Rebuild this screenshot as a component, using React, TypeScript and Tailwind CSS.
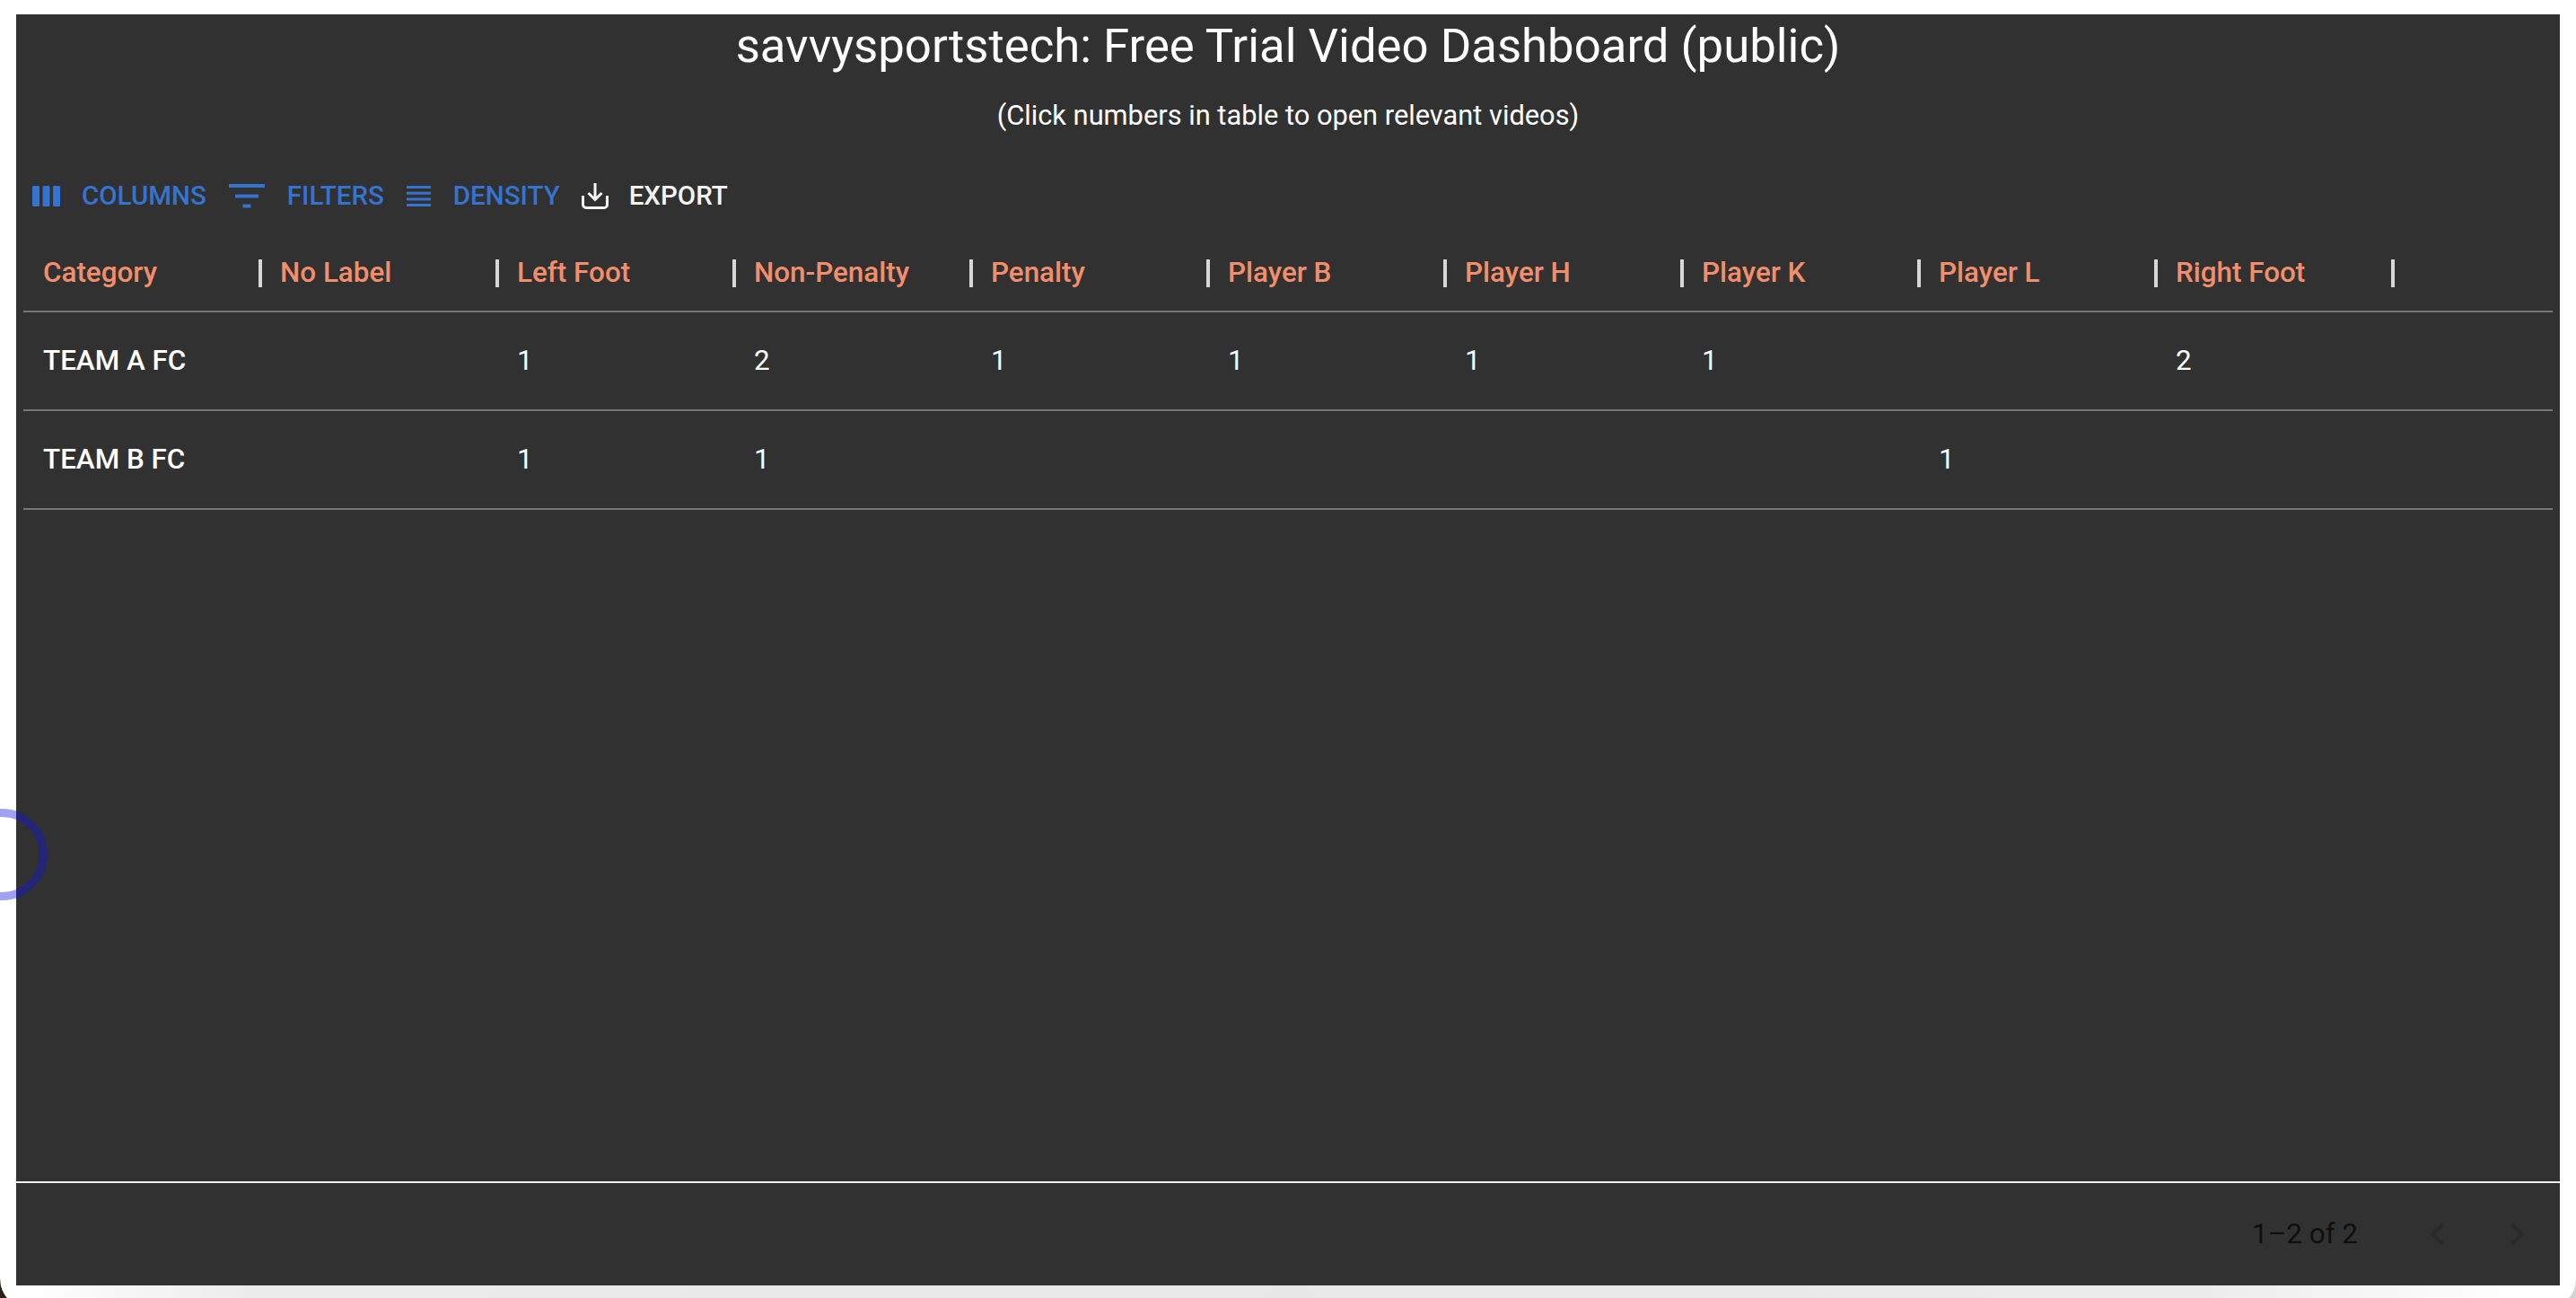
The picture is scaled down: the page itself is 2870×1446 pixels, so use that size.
const columns = ["Category", "No Label", "Left Foot", "Non-Penalty", "Penalty", "Player B", "Player H", "Player K", "Player L", "Right Foot"];

const rows = [
  ["TEAM A FC", "", "1", "2", "1", "1", "1", "1", "", "2"],
  ["TEAM B FC", "", "1", "1", "", "", "", "", "1", ""],
];

const ColumnsIcon = () => (
  <svg width="31" height="23" viewBox="0 0 31 23" fill="#3573d1">
    <rect x="0" y="0" width="8" height="23" rx="1.5" />
    <rect x="11.5" y="0" width="8" height="23" rx="1.5" />
    <rect x="23" y="0" width="8" height="23" rx="1.5" />
  </svg>
);

const FilterIcon = () => (
  <svg width="40" height="27" viewBox="0 0 40 27" fill="#3573d1">
    <rect x="0" y="0" width="40" height="4" />
    <rect x="7" y="11.5" width="26" height="4" />
    <rect x="15.5" y="22.5" width="9" height="4" />
  </svg>
);

const DensityIcon = () => (
  <svg width="27" height="23" viewBox="0 0 27 23" fill="#3573d1">
    <rect x="0" y="0" width="27" height="3" />
    <rect x="0" y="6.7" width="27" height="3" />
    <rect x="0" y="13.4" width="27" height="3" />
    <rect x="0" y="20" width="27" height="3" />
  </svg>
);

const ExportIcon = () => (
  <svg width="30" height="29" viewBox="0 0 30 29" fill="none" stroke="#f5f5f5" strokeWidth="3">
    <path d="M15 0v18M7.5 11 15 18.5 22.5 11" />
    <path d="M1.5 14v10a3.5 3.5 0 0 0 3.5 3.5h20a3.5 3.5 0 0 0 3.5-3.5V14" />
  </svg>
);

const Chevron = ({ d }: { d: string }) => (
  <svg width="52" height="52" viewBox="0 0 24 24" fill="#2a2a2a">
    <path d={d} />
  </svg>
);

export default function App() {
  return (
    <div className="h-[1446px] w-[2870px] overflow-hidden bg-[linear-gradient(to_right,#2a2018_50%,#d4d4d4_50%)] font-['Roboto',sans-serif]">
      <div className="relative flex h-[1458px] flex-col overflow-hidden rounded-b-[34px] bg-white">
        <div className="mx-[18px] mt-[16px] flex h-[1416px] flex-col bg-[#313131]">
          <h1 className="mt-[10px] h-[50px] text-center text-[52.7px] leading-[50px] font-normal text-white">
            savvysportstech: Free Trial Video Dashboard (public)
          </h1>
          <p className="mt-[27px] h-[52px] text-center text-[30.8px] leading-[52px] text-white">
            (Click numbers in table to open relevant videos)
          </p>

          <div className="mt-[35px] flex h-[56px] items-center pl-[18px] text-[29.5px] font-medium">
            <div className="flex items-center gap-[24px] text-[#3573d1]">
              <ColumnsIcon />
              <span>COLUMNS</span>
            </div>
            <div className="ml-[25px] flex items-center gap-[25px] text-[#3573d1]">
              <FilterIcon />
              <span>FILTERS</span>
            </div>
            <div className="ml-[25px] flex items-center gap-[25px] text-[#3573d1]">
              <DensityIcon />
              <span>DENSITY</span>
            </div>
            <div className="ml-[24px] flex items-center gap-[23px] text-[#f5f5f5]">
              <ExportIcon />
              <span>EXPORT</span>
            </div>
          </div>

          <div className="mx-[8px] mt-[15px] flex-1">
            <div className="flex h-[87px] items-center border-b-2 border-[#777777]">
              {columns.map((c) => (
                <div key={c} className="relative flex h-full w-[264px] items-center px-[22px] text-[31.4px] font-medium text-[#f28e6b]">
                  {c}
                  <div className="absolute right-[-2px] top-[28px] h-[31px] w-[4px] bg-[#d8d8d8]" />
                </div>
              ))}
            </div>
            {rows.map((r) => (
              <div key={r[0]} className="flex h-[110px] items-center border-b-2 border-[#777777] text-[31.4px] text-white">
                {r.map((v, i) => (
                  <div key={i} className={i === 0 ? "w-[264px] px-[22px] font-medium" : "w-[264px] px-[22px]"}>
                    {v}
                  </div>
                ))}
              </div>
            ))}
          </div>

          <div className="flex h-[116px] items-center justify-end border-t-2 border-[#f0f0f0] pr-[22px]">
            <span className="text-[31.4px] text-[#0f0f0f]">1–2 of 2</span>
            <div className="ml-[63px] flex items-center gap-[36px]">
              <Chevron d="M15.41 7.41 14 6l-6 6 6 6 1.41-1.41L10.83 12z" />
              <Chevron d="M10 6 8.59 7.41 13.17 12l-4.58 4.59L10 18l6-6z" />
            </div>
          </div>
        </div>

        <div className="flex-1 bg-[linear-gradient(to_right,#ffffff_1%,#ebebeb_10%,#e7e7e7_50%,#ebebeb_85%,#ffffff_98%)]" />

        {/* recording cursor ring, half off the left edge */}
        <div className="absolute left-[-49px] top-[901px] h-[102px] w-[102px] rounded-full border-[9px] border-[#1111e666]" />
      </div>
    </div>
  );
}
